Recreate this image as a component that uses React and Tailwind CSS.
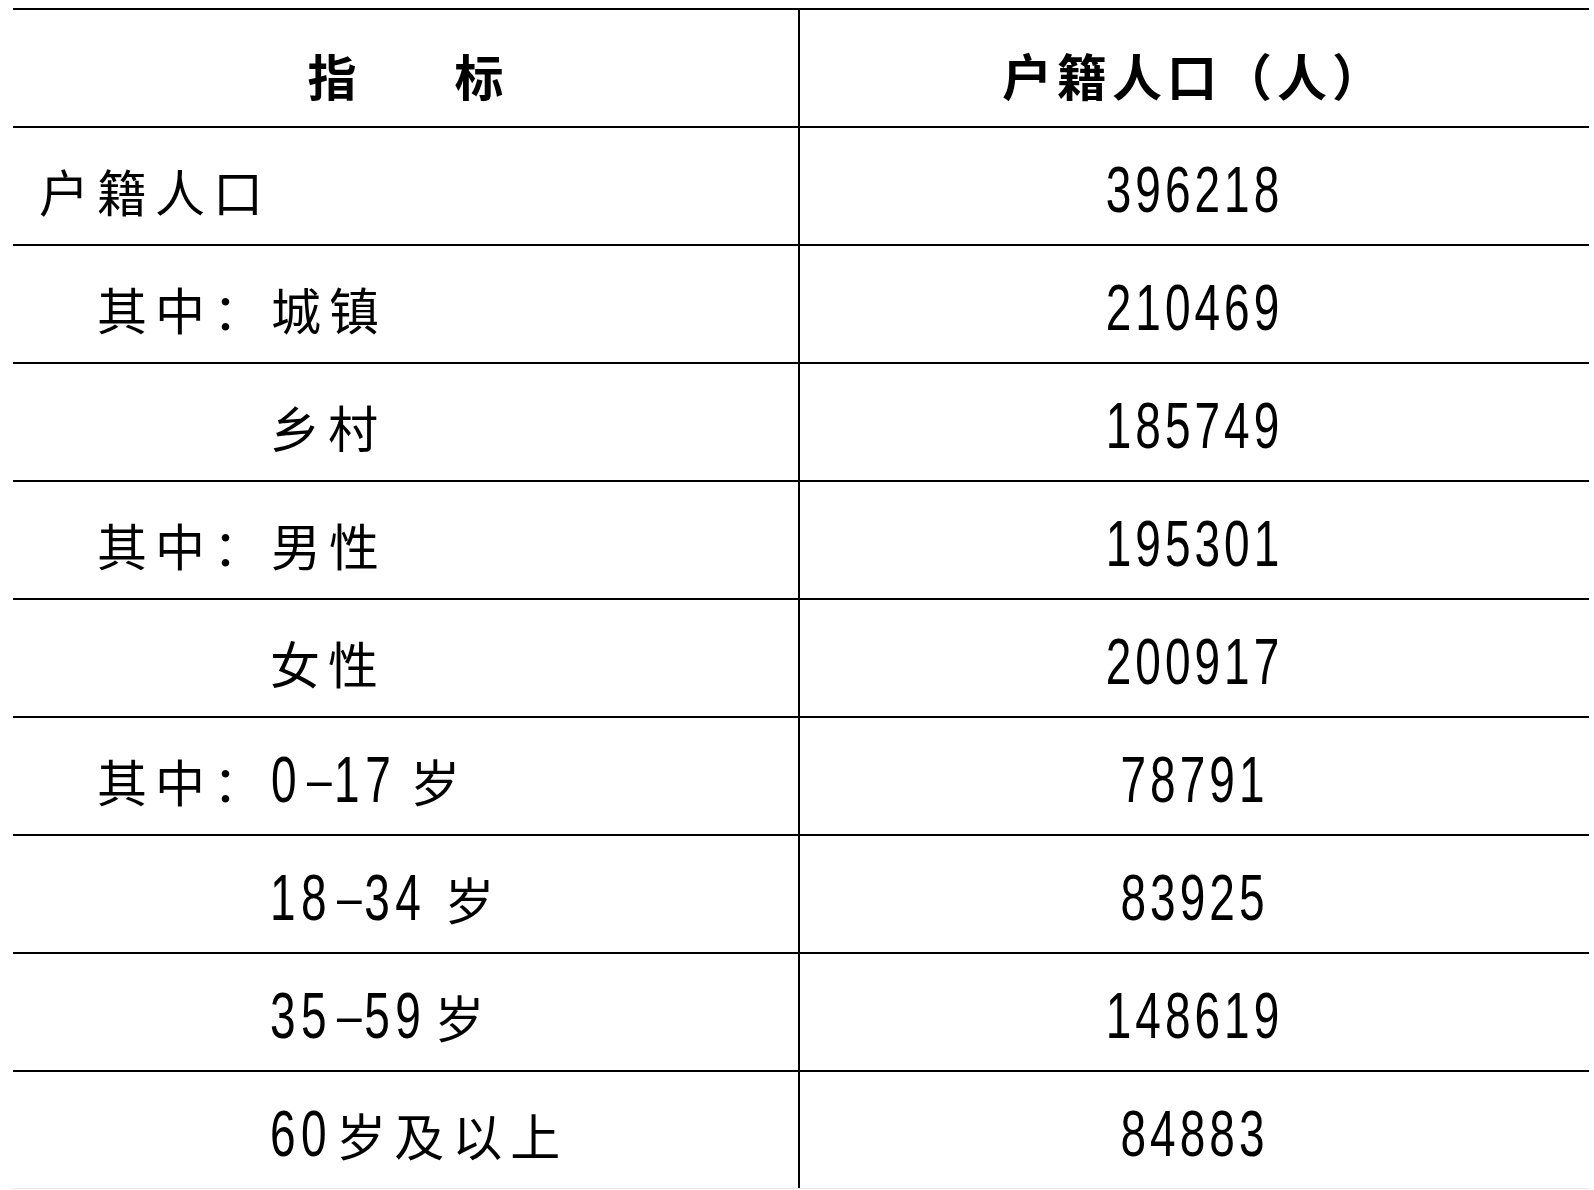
import React from 'react';

const rows = [
  { level: 1, label: [['c', '户籍人口']], value: '396218' },
  { level: 2, label: [['c', '其中：城镇']], value: '210469' },
  { level: 3, label: [['c', '乡村']], value: '185749' },
  { level: 2, label: [['c', '其中：男性']], value: '195301' },
  { level: 3, label: [['c', '女性']], value: '200917' },
  { level: 2, label: [['c', '其中：'], ['n', '0-17'], ['s', 'w-[14px]'], ['c', '岁']], value: '78791' },
  { level: 3, label: [['n', '18-34'], ['s', 'w-[18px]'], ['c', '岁']], value: '83925' },
  { level: 3, label: [['n', '35-59'], ['s', 'w-[8px]'], ['c', '岁']], value: '148619' },
  { level: 3, label: [['n', '60'], ['s', 'w-[4px]'], ['c', '岁及以上']], value: '84883' },
];

const indent = {
  1: 'pl-[26px]',
  2: 'pl-[84px]',
  3: 'pl-[257px]',
};

// digits in the source use a tall narrow face, so stretch them a bit
const Num = ({ text, track = 'tracking-[5.5px]' }) => (
  <span className={`inline-block font-['Liberation_Sans',sans-serif] text-[46px] leading-none scale-y-[1.39] ${track}`}>
    {text.split('').map((ch, i) =>
      ch === '-' ? (
        <span key={i} className="inline-block w-[14px] mx-[9px] text-center tracking-normal scale-x-[2.2] scale-y-[0.7]">-</span>
      ) : (
        <span key={i}>{ch}</span>
      )
    )}
  </span>
);

const Label = ({ parts }) => (
  <span className="inline-flex items-center">
    {parts.map(([kind, text], i) => {
      if (kind === 'n') return <Num key={i} text={text} />;
      if (kind === 's') return <span key={i} className={`inline-block whitespace-pre text-[10px] ${text}`}> </span>;
      return (
        <span key={i} className="text-[50px] leading-none tracking-[8px]">
          {text}
        </span>
      );
    })}
  </span>
);

const App = () => {
  return (
    <div className="min-h-screen bg-white text-black font-['Noto_Sans_CJK_SC',sans-serif]">
      <div className="pt-[8px] pl-[13px] w-[1589px]">
        <div className="border-b border-gray-200">
          {/* header */}
          <div className="grid grid-cols-[785px_1fr] h-[118px] border-t-2 border-black">
            <div className="flex items-center justify-center pt-[12px] text-[49px] font-bold leading-none">
              指　　标
            </div>
            <div className="flex items-center justify-center pt-[12px] border-l-2 border-black text-[50px] font-bold leading-none tracking-[5px]">
              户籍人口（人）
            </div>
          </div>

          {rows.map((r) => (
            <div key={r.value} className="grid grid-cols-[785px_1fr] h-[118px] border-t-2 border-black">
              <div className={`flex items-center pt-[8px] ${indent[r.level]}`}>
                <Label parts={r.label} />
              </div>
              <div className="flex items-center justify-center pt-[8px] border-l-2 border-black">
                <Num text={r.value} track="tracking-[4px]" />
              </div>
            </div>
          ))}
        </div>
      </div>
    </div>
  );
};

export default App;
